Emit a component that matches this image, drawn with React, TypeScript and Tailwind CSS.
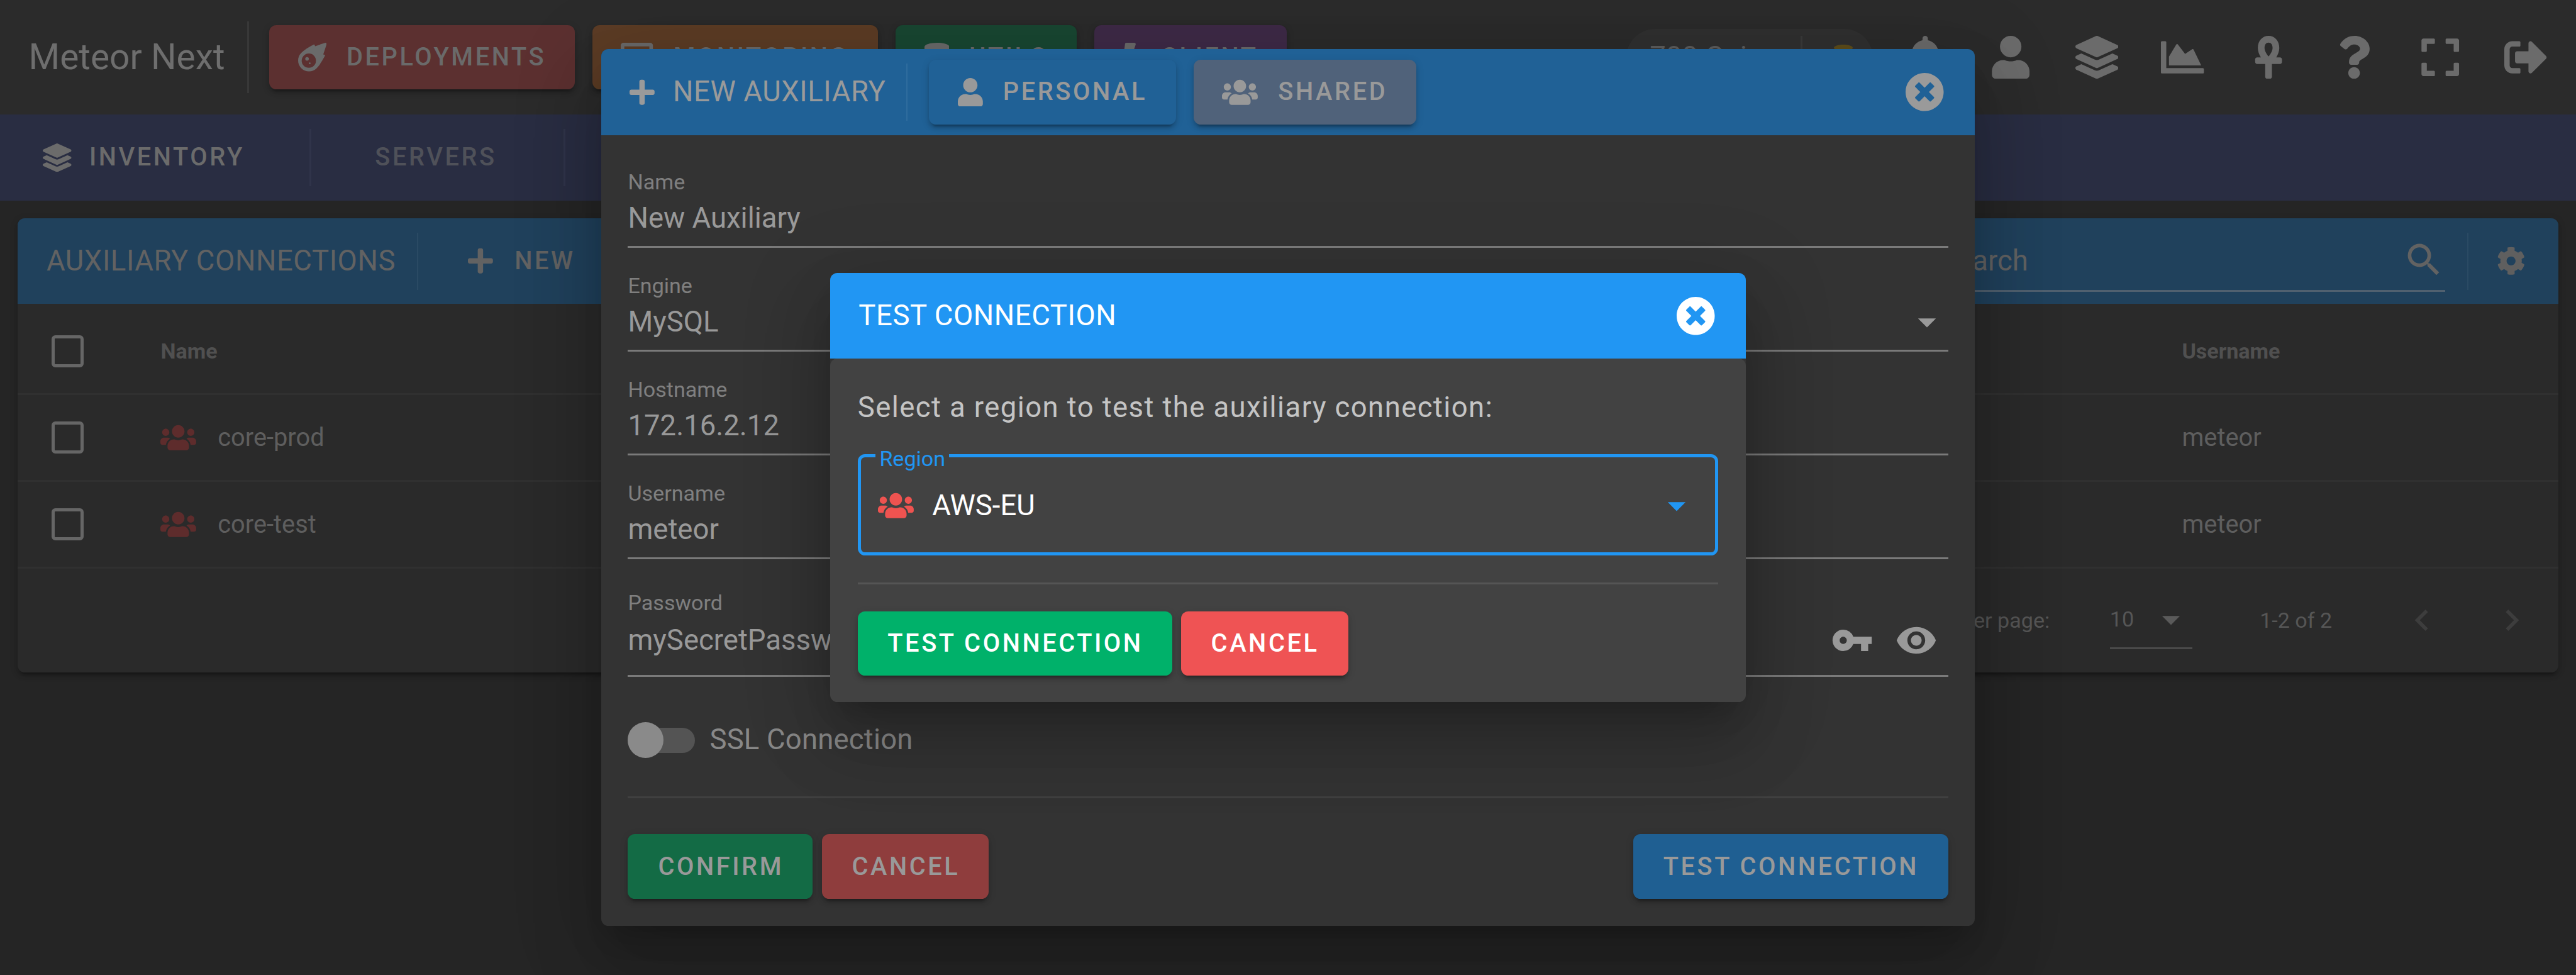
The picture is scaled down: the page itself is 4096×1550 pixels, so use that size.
import type { ReactNode } from "react";
import {
  FaAnkh,
  FaBell,
  FaBolt,
  FaChartArea,
  FaCoins,
  FaCog,
  FaDatabase,
  FaDesktop,
  FaExpand,
  FaLayerGroup,
  FaMeteor,
  FaPlus,
  FaQuestion,
  FaSignOutAlt,
  FaTimesCircle,
  FaUser,
  FaUsers,
} from "react-icons/fa";
import { MdArrowDropDown, MdChevronLeft, MdChevronRight, MdVisibility, MdVpnKey } from "react-icons/md";

const btnText = "text-[39.8px] font-medium tracking-[0.0893em]";
const btnShadow = "shadow-[0_9px_3px_-6px_rgb(0_0_0/0.2),0_6px_6px_0_rgb(0_0_0/0.14),0_3px_14px_0_rgb(0_0_0/0.12)]";
const dialogShadow = "shadow-[0_31px_43px_-20px_rgb(0_0_0/0.2),0_68px_108px_9px_rgb(0_0_0/0.14),0_26px_131px_23px_rgb(0_0_0/0.12)]";

function NavButton({ icon, label, bg }: { icon: ReactNode; label: string; bg: string }) {
  return (
    <div className={`flex h-[102.4px] items-center gap-[32px] rounded-[11.4px] px-[45.5px] text-[#6a6a6a] ${btnText} ${btnShadow} ${bg}`}>
      {icon}
      <span>{label}</span>
    </div>
  );
}

function Field({ label, value }: { label: string; value: string }) {
  return (
    <div className="mt-[37px] h-[128px] border-b-[3px] border-[#7a7a7a] pb-[10px]">
      <div className="text-[34.1px] leading-[47px] text-[#7f7f7f]">{label}</div>
      <div className="flex items-center justify-between text-[45.5px] leading-[68px] text-[#999999]">
        <span>{value}</span>
      </div>
    </div>
  );
}

function Row({ name }: { name: string }) {
  return (
    <div className="flex h-[138px] items-center border-b-[3px] border-[#303030] pl-[54px]">
      <div className="h-[51px] w-[51px] shrink-0 rounded-[6px] border-[5.7px] border-[#666666]" />
      <div className="ml-[122px] flex w-[3214px] items-center gap-[34px] text-[39.8px] text-[#5e5e5e]">
        <FaUsers className="h-[45.5px] w-[56.9px] shrink-0 text-[#5e2c2c]" />
        <span>{name}</span>
      </div>
      <span className="text-[39.8px] text-[#5e5e5e]">meteor</span>
    </div>
  );
}

export default function App() {
  return (
    <div className="relative h-[1550px] w-[4096px] overflow-hidden bg-[#252525] [font-family:Roboto,sans-serif]">
      {/* top toolbar */}
      <header className="flex h-[182px] items-center bg-[#2b2b2b] pl-[45.5px]">
        <div className="w-[347px] text-[56.9px] text-[#6e6e6e]">Meteor Next</div>
        <div className="mr-[32.5px] h-[114px] w-[3px] bg-[#383838]" />
        <div className="flex gap-[28.4px]">
          <NavButton bg="bg-[#5c3030]" label="DEPLOYMENTS" icon={<FaMeteor className="h-[45.5px] w-[45.5px] shrink-0" />} />
          <NavButton bg="bg-[#5c3c25]" label="MONITORING" icon={<FaDesktop className="h-[45.5px] w-[51.2px] shrink-0" />} />
          <NavButton bg="bg-[#194732]" label="UTILS" icon={<FaDatabase className="h-[45.5px] w-[39.8px] shrink-0" />} />
          <NavButton bg="bg-[#3e2a47]" label="CLIENT" icon={<FaBolt className="h-[45.5px] w-[28.4px] shrink-0" />} />
        </div>
        <div className="ml-auto flex items-center pr-[11.4px] text-[#6b6b6b]">
          <div className="mr-[15px] flex h-[91px] w-[391.4px] items-center rounded-[45.5px] bg-[#303030] pl-[37px] text-[#5e5e5e]">
            <span className="w-[240px] text-[45.5px]">700 Coins</span>
            <div className="h-[68px] w-[3px] bg-[#3a3a3a]" />
            <FaCoins className="ml-[40px] h-[40px] w-[40px] text-[#5e4d1a]" />
          </div>
          {[FaBell, FaUser, FaLayerGroup, FaChartArea, FaAnkh, FaQuestion, FaExpand, FaSignOutAlt].map((Icon, i) => (
            <div key={i} className="flex h-[136.5px] w-[136.5px] items-center justify-center">
              <Icon className="h-[68.3px] w-[68.3px]" />
            </div>
          ))}
        </div>
      </header>

      {/* second bar */}
      <nav className="flex h-[136.5px] items-center bg-[#292d42]">
        <div className={`flex w-[492px] items-center gap-[28.4px] pl-[68px] text-[#6b6b6b] ${btnText}`}>
          <FaLayerGroup className="h-[45.5px] w-[45.5px]" />
          <span>INVENTORY</span>
        </div>
        <div className="h-[91px] w-[3px] bg-[#30344a]" />
        <div className={`w-[401px] pr-[5px] text-center text-[#4f5159] ${btnText}`}>SERVERS</div>
        <div className="h-[91px] w-[3px] bg-[#30344a]" />
      </nav>

      {/* auxiliary connections card */}
      <main className="px-[28.4px] pt-[28.4px]">
        <section className="h-[722px] rounded-[11.4px] bg-[#2a2a2a] shadow-[0_9px_3px_-6px_rgb(0_0_0/0.2),0_6px_6px_0_rgb(0_0_0/0.14),0_3px_14px_0_rgb(0_0_0/0.12)]">
          <div className="flex h-[136.5px] items-center rounded-t-[11.4px] bg-[#20415c] pl-[45.5px]">
            <div className="w-[589px] text-[45.5px] tracking-[0.0125em] text-[#626262]">AUXILIARY CONNECTIONS</div>
            <div className="h-[91px] w-[2px] bg-[#2a4a64]" />
            <div className={`ml-[79.6px] flex items-center gap-[34px] text-[#626262] ${btnText}`}>
              <FaPlus className="h-[45.5px] w-[39.8px]" />
              <span>NEW</span>
            </div>
            <div className="ml-auto flex items-center">
              <div className="flex h-[97px] w-[839px] items-center justify-between border-b-[3px] border-[#50606f] pl-[36px] text-[45.5px] text-[#626262]">
                <span className="pt-[3px]">Search</span>
                <svg viewBox="0 0 24 24" className="h-[68.3px] w-[68.3px] fill-[#626262]">
                  <path d="M9.5,3A6.5,6.5 0 0,1 16,9.5C16,11.11 15.41,12.59 14.44,13.73L14.71,14H15.5L20.5,19L19,20.5L14,15.5V14.71L13.73,14.44C12.59,15.41 11.11,16 9.5,16A6.5,6.5 0 0,1 3,9.5A6.5,6.5 0 0,1 9.5,3M9.5,5C7,5 5,7 5,9.5C5,12 7,14 9.5,14C12,14 14,12 14,9.5C14,7 12,5 9.5,5Z" />
                </svg>
              </div>
              <div className="ml-[35px] mr-[45px] h-[91px] w-[2px] bg-[#2a4a64]" />
              <FaCog className="mr-[52px] h-[45.5px] w-[45.5px] text-[#5f5f5f]" />
            </div>
          </div>

          <div className="flex h-[144.5px] items-center border-b-[3px] border-[#303030] pl-[54px] pt-[8px]">
            <div className="h-[51px] w-[51px] shrink-0 rounded-[6px] border-[5.7px] border-[#666666]" />
            <div className="ml-[122px] w-[3214px] text-[34.1px] font-bold text-[#505050]">Name</div>
            <span className="text-[34.1px] font-bold text-[#505050]">Username</span>
          </div>
          <Row name="core-prod" />
          <Row name="core-test" />

          <div className="flex h-[165px] items-center justify-end pr-[5.7px] text-[34.1px] text-[#565656]">
            <span>Rows per page:</span>
            <div className="ml-[95.5px] flex h-[91px] w-[131px] items-center justify-between border-b-[3px] border-[#4a4a4a]">
              <span>10</span>
              <MdArrowDropDown className="h-[68px] w-[68px] text-[#5a5a5a]" />
            </div>
            <span className="ml-[107.4px]">1-2 of 2</span>
            <div className="ml-[75px] flex h-[136.5px] w-[136.5px] items-center justify-center text-[#3d3d3d]">
              <MdChevronLeft className="h-[68px] w-[68px]" />
            </div>
            <div className="ml-[5.7px] flex h-[136.5px] w-[136.5px] items-center justify-center text-[#3d3d3d]">
              <MdChevronRight className="h-[68px] w-[68px]" />
            </div>
          </div>
        </section>
      </main>

      {/* new auxiliary dialog */}
      <div className="absolute inset-0 flex items-center justify-center">
        <div className={`h-[1393.8px] w-[2184.5px] rounded-[11.4px] bg-[#333333] ${dialogShadow}`}>
          <div className="flex h-[136.5px] items-center rounded-t-[11.4px] bg-[#206196] pl-[45.5px]">
            <FaPlus className="h-[45.5px] w-[39.8px] text-[#9a9a9a]" />
            <span className="ml-[29px] text-[45.5px] tracking-[0.0125em] text-[#9a9a9a]">NEW AUXILIARY</span>
            <div className="ml-[33px] h-[91px] w-[2px] bg-[#2f6c9e]" />
            <div className={`ml-[34px] flex h-[102.4px] items-center gap-[32px] rounded-[11.4px] bg-[#206196] px-[45.5px] text-[#999999] ${btnText} ${btnShadow}`}>
              <FaUser className="h-[45.5px] w-[39.8px]" />
              <span>PERSONAL</span>
            </div>
            <div className={`ml-[28.4px] flex h-[102.4px] items-center gap-[32px] rounded-[11.4px] bg-[#50627a] px-[45.5px] text-[#999999] ${btnText} ${btnShadow}`}>
              <FaUsers className="h-[45.5px] w-[56.9px]" />
              <span>SHARED</span>
            </div>
            <FaTimesCircle className="ml-auto mr-[49px] h-[62.5px] w-[62.5px] text-[#9a9a9a]" />
          </div>

          <div className="flex flex-col px-[42.7px]">
            <div className="mt-[14px]">
              <Field label="Name" value="New Auxiliary" />
            </div>
            <div className="mt-[37px] h-[128px] border-b-[3px] border-[#7a7a7a]">
              <div className="text-[34.1px] leading-[47px] text-[#7f7f7f]">Engine</div>
              <div className="flex items-center justify-between text-[45.5px] leading-[68px] text-[#999999]">
                <span>MySQL</span>
                <MdArrowDropDown className="h-[68px] w-[68px]" />
              </div>
            </div>
            <Field label="Hostname" value="172.16.2.12" />
            <Field label="Username" value="meteor" />
            <div className="mt-[47px] h-[140px] border-b-[3px] border-[#7a7a7a]">
              <div className="text-[34.1px] leading-[45.5px] text-[#7f7f7f]">Password</div>
              <div className="mt-[3px] flex items-center text-[45.5px] leading-[68px] text-[#999999]">
                <span>mySecretPassword</span>
                <MdVpnKey className="ml-auto h-[68px] w-[68px]" />
                <MdVisibility className="ml-[34px] mr-[17px] h-[68px] w-[68px]" />
              </div>
            </div>
            <div className="mt-[67px] flex h-[68px] items-center">
              <div className="relative h-[40px] w-[107px] rounded-full bg-[#545454]">
                <div className="absolute -top-[8.5px] left-0 h-[57px] w-[57px] rounded-full bg-[#8a8a8a]" />
              </div>
              <span className="ml-[23px] text-[45.5px] tracking-[0.004em] text-[#888888]">SSL Connection</span>
            </div>
            <div className="mt-[55.6px] h-[3px] bg-[#404040]" />
            <div className="mt-[57px] flex">
              <div className={`flex h-[102.4px] items-center rounded-[11.4px] bg-[#136b45] pl-[48px] pr-[45.5px] text-[#999999] ${btnText} ${btnShadow}`}>CONFIRM</div>
              <div className={`ml-[15px] flex h-[102.4px] items-center rounded-[11.4px] bg-[#8f3d3d] pl-[48px] pr-[45.5px] text-[#999999] ${btnText} ${btnShadow}`}>CANCEL</div>
              <div className={`ml-auto flex h-[102.4px] items-center rounded-[11.4px] bg-[#1f5f92] pl-[48px] pr-[46.5px] text-[#999999] ${btnText} ${btnShadow}`}>TEST CONNECTION</div>
            </div>
          </div>
        </div>
      </div>

      {/* test connection dialog */}
      <div className="absolute inset-0 flex items-center justify-center">
        <div className={`h-[682.7px] w-[1456.4px] rounded-[11.4px] ${dialogShadow}`}>
          <div className="flex h-[136.5px] items-center justify-between rounded-t-[11.4px] bg-[#2196f3] pl-[45.5px] pr-[49px]">
            <span className="text-[45.5px] tracking-[0.0125em] text-white">TEST CONNECTION</span>
            <FaTimesCircle className="h-[62.5px] w-[62.5px] text-white" />
          </div>
          <div className="h-[546.2px] rounded-[11.4px] bg-[#424242] px-[44px] pt-[44px]">
            <p className="text-[45.5px] leading-[68px] tracking-[0.031em] text-[#c4c4c4]">Select a region to test the auxiliary connection:</p>
            <div className="relative mt-[40px] flex h-[160.7px] items-center rounded-[11.4px] border-[5.7px] border-[#2196f3] pl-[27px] pr-[27.6px] pt-[3px]">
              <span className="absolute -top-[20.5px] left-[23.4px] bg-[#424242] px-[6.2px] text-[34.1px] leading-[45.5px] text-[#2196f3]">Region</span>
              <FaUsers className="h-[45.5px] w-[56.9px] shrink-0 text-[#ef5350]" />
              <span className="ml-[29.6px] text-[45.5px] text-white">AWS-EU</span>
              <MdArrowDropDown className="ml-auto h-[68px] w-[68px] text-[#2196f3]" />
            </div>
            <div className="mt-[42.7px] h-[3px] bg-[#555555]" />
            <div className="mt-[43px] flex gap-[14px]">
              <div className={`flex h-[102.4px] items-center rounded-[11.4px] bg-[#00b16a] pl-[47.5px] pr-[46px] text-white ${btnText} ${btnShadow}`}>TEST CONNECTION</div>
              <div className={`flex h-[102.4px] items-center rounded-[11.4px] bg-[#ef5354] pl-[48px] pr-[46px] text-white ${btnText} ${btnShadow}`}>CANCEL</div>
            </div>
          </div>
        </div>
      </div>
    </div>
  );
}
